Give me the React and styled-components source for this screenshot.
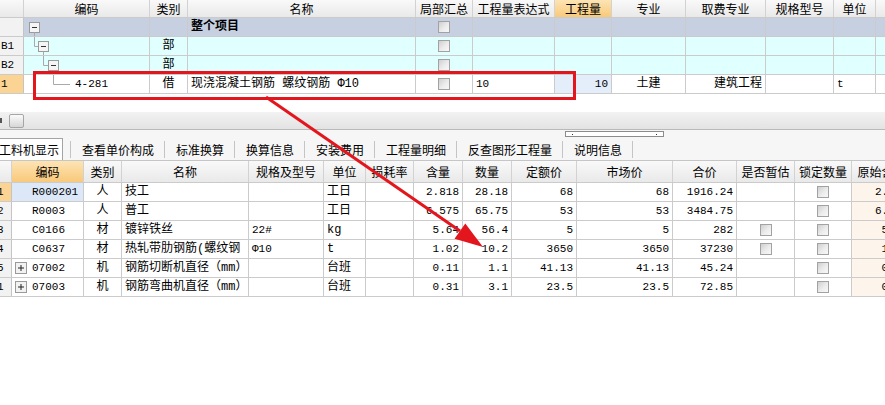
import React from "react";
import styled, { createGlobalStyle } from "styled-components";

const GlobalStyle = createGlobalStyle`
  html, body {
    margin: 0;
    padding: 0;
    background: #fff;
  }
  body {
    width: 885px;
    height: 405px;
    overflow: hidden;
    font-family: "Noto Sans CJK SC", sans-serif;
    font-size: 12px;
    color: #000;
  }
`;

const TOP_COLS = [24, 126, 38, 228, 57, 82, 57, 74, 80, 68, 42, 80]
  .map((w) => w + "px")
  .join(" ");
const BOTTOM_COLS = [12, 72, 38, 127, 75, 42, 48, 49, 49, 65, 96, 64, 58, 57, 60]
  .map((w) => w + "px")
  .join(" ");

const topHeaders = ["", "编码", "类别", "名称", "局部汇总", "工程量表达式", "工程量", "专业", "取费专业", "规格型号", "单位", ""];
const bottomHeaders = ["", "编码", "类别", "名称", "规格及型号", "单位", "损耗率", "含量", "数量", "定额价", "市场价", "合价", "是否暂估", "锁定数量", "原始含量"];

const topRows = [
  { head: "", level: 0, bg: "#c6d0e0", name: "整个项目", bold: true },
  { head: "B1", level: 1, bg: "#e0ffff", type: "部" },
  { head: "B2", level: 2, bg: "#e0ffff", type: "部" },
  {
    head: "1",
    level: 3,
    bg: "#fff",
    active: true,
    code: "4-281",
    type: "借",
    name: "现浇混凝土钢筋 螺纹钢筋 Φ10",
    expr: "10",
    qty: "10",
    major: "土建",
    fee: "建筑工程",
    unit: "t",
  },
];

const parts = [
  { n: "1", code: "R000201", sel: true, type: "人", name: "技工", spec: "", unit: "工日", qty: "2.818", num: "28.18", price: "68", market: "68", total: "1916.24", est: false, orig: "2.818" },
  { n: "2", code: "R0003", type: "人", name: "普工", spec: "", unit: "工日", qty: "6.575", num: "65.75", price: "53", market: "53", total: "3484.75", est: false, orig: "6.575" },
  { n: "3", code: "C0166", type: "材", name: "镀锌铁丝", spec: "22#", unit: "kg", qty: "5.64", num: "56.4", price: "5", market: "5", total: "282", est: true, orig: "5.64" },
  { n: "4", code: "C0637", type: "材", name: "热轧带肋钢筋(螺纹钢", spec: "Φ10", unit: "t", qty: "1.02", num: "10.2", price: "3650", market: "3650", total: "37230", est: true, orig: "1.02" },
  { n: "5", code: "07002", expand: true, type: "机", name: "钢筋切断机直径（mm）", spec: "", unit: "台班", qty: "0.11", num: "1.1", price: "41.13", market: "41.13", total: "45.24", est: false, orig: "0.11" },
  { n: "1", code: "07003", expand: true, type: "机", name: "钢筋弯曲机直径（mm）", spec: "", unit: "台班", qty: "0.31", num: "3.1", price: "23.5", market: "23.5", total: "72.85", est: false, orig: "0.31" },
];

const tabs = ["工料机显示", "查看单价构成", "标准换算", "换算信息", "安装费用", "工程量明细", "反查图形工程量", "说明信息"];

const TREE_X = [10, 19, 29];

const TreeLines = ({ level }) => {
  const line = "#a9a9a9";
  const parent = level > 0 ? TREE_X[level - 1] : null;
  const own = level < 3 ? TREE_X[level] : null;
  return (
    <svg width="50" height="18" viewBox="0 0 50 18" style={{ display: "block", flex: "none" }}>
      {parent !== null && (
        <>
          <line x1={parent + 0.5} y1="0" x2={parent + 0.5} y2="9.5" stroke={line} />
          <line x1={parent + 0.5} y1="9.5" x2={own !== null ? own - 5 : 46} y2="9.5" stroke={line} />
        </>
      )}
      {own !== null && (
        <>
          <rect x={own - 4.5} y="4.5" width="10" height="10" fill="#f5f5f5" stroke="#9a9a9a" />
          <line x1={own - 2} y1="9.5" x2={own + 3} y2="9.5" stroke="#333" />
          <line x1={own + 0.5} y1="14.5" x2={own + 0.5} y2="18" stroke={line} />
        </>
      )}
    </svg>
  );
};

const PlusBox = () => (
  <svg width="12" height="12" viewBox="0 0 12 12" style={{ display: "block", flex: "none" }}>
    <rect x="0.5" y="0.5" width="11" height="11" fill="#f2f2f2" stroke="#9a9a9a" />
    <line x1="3" y1="6" x2="9" y2="6" stroke="#222" />
    <line x1="6" y1="3" x2="6" y2="9" stroke="#222" />
  </svg>
);

const Annotation = () => (
  <Overlay width="885" height="405" viewBox="0 0 885 405">
    <rect x="34.5" y="72.5" width="540" height="26" fill="none" stroke="#e3161e" strokeWidth="3" />
    <line x1="266" y1="97" x2="460" y2="231" stroke="#e3161e" strokeWidth="3" />
    <polygon points="483,247 454.5,238.8 465.3,223.5" fill="#e3161e" />
  </Overlay>
);

const App = () => (
  <>
    <GlobalStyle />
    <Page>
      <TopGrid>
        <GridRow $cols={TOP_COLS} $h={18}>
          {topHeaders.map((h, i) => (
            <HeadCell key={i} $active={i === 6}>
              {h}
            </HeadCell>
          ))}
        </GridRow>
        {topRows.map((r, i) => (
          <GridRow key={i} $cols={TOP_COLS} $h={19} $bg={r.bg}>
            <RowHead $active={r.active}>
              <Mono>{r.head}</Mono>
            </RowHead>
            <TreeCell>
              <TreeLines level={r.level} />
              {r.code && <Mono>{r.code}</Mono>}
            </TreeCell>
            <Cell $align="center">{r.type}</Cell>
            <Cell $bold={r.bold}>{r.name}</Cell>
            <Cell $align="center">
              <Check />
            </Cell>
            <Cell>
              <Mono>{r.expr}</Mono>
            </Cell>
            <Cell $align="right" $bg={r.qty ? "#e4eefa" : undefined}>
              <Mono>{r.qty}</Mono>
            </Cell>
            <Cell $align="center">{r.major}</Cell>
            <Cell $align="right">{r.fee}</Cell>
            <Cell />
            <Cell>
              <Mono>{r.unit}</Mono>
            </Cell>
            <Cell />
          </GridRow>
        ))}
      </TopGrid>

      <Toolbar>
        <EdgeMark />
        <ToolButton />
      </Toolbar>

      <TabBar>
        {tabs.map((t, i) => (
          <React.Fragment key={t}>
            <Tab $selected={i === 0}>{t}</Tab>
            <TabSep />
          </React.Fragment>
        ))}
        <Splitter>
          <Dot />
          <Dot />
        </Splitter>
      </TabBar>

      <BottomGrid>
        <GridRow $cols={BOTTOM_COLS} $h={22}>
          {bottomHeaders.map((h, i) => (
            <HeadCell key={i} $active={i === 1}>
              {h}
            </HeadCell>
          ))}
        </GridRow>
        {parts.map((p, i) => (
          <GridRow key={i} $cols={BOTTOM_COLS} $h={19}>
            <RowHead $active={p.sel} $clip>
              <Mono>{p.n}</Mono>
            </RowHead>
            <CodeCell $bg={p.sel ? "#dce8f7" : undefined} $expand={p.expand}>
              {p.expand && <PlusBox />}
              <Mono>{p.code}</Mono>
            </CodeCell>
            <Cell $align="center">{p.type}</Cell>
            <Cell>{p.name}</Cell>
            <Cell>
              <Mono>{p.spec}</Mono>
            </Cell>
            <Cell>{p.unit}</Cell>
            <Cell />
            <Cell $align="right">
              <Mono>{p.qty}</Mono>
            </Cell>
            <Cell $align="right">
              <Mono>{p.num}</Mono>
            </Cell>
            <Cell $align="right">
              <Mono>{p.price}</Mono>
            </Cell>
            <Cell $align="right">
              <Mono>{p.market}</Mono>
            </Cell>
            <Cell $align="right">
              <Mono>{p.total}</Mono>
            </Cell>
            <Cell $align="center">{p.est && <Check />}</Cell>
            <Cell $align="center">
              <Check />
            </Cell>
            <Cell $align="right" $bg="#fdf5ec">
              <Mono>{p.orig}</Mono>
            </Cell>
          </GridRow>
        ))}
      </BottomGrid>

      <Annotation />
    </Page>
  </>
);

const Page = styled.div`
  position: relative;
  width: 885px;
  height: 405px;
  overflow: hidden;
  display: flex;
  flex-direction: column;
  background: #fff;
`;

const TopGrid = styled.div`
  height: 112px;
  flex: none;
  background: #fff;
`;

const GridRow = styled.div`
  display: grid;
  grid-template-columns: ${(p) => p.$cols};
  height: ${(p) => p.$h}px;
  box-sizing: border-box;
  border-bottom: 1px solid #cbcbcb;
  background: ${(p) => p.$bg || "#fff"};
  width: max-content;
`;

const Cell = styled.div`
  display: flex;
  align-items: center;
  justify-content: ${(p) =>
    p.$align === "right" ? "flex-end" : p.$align === "center" ? "center" : "flex-start"};
  padding: 0 3px;
  box-sizing: border-box;
  min-width: 0;
  overflow: hidden;
  white-space: nowrap;
  border-right: 1px solid #cbcbcb;
  background: ${(p) => p.$bg || "transparent"};
  font-family: "Liberation Mono", "Noto Sans CJK SC", monospace;
  font-size: 12px;
  line-height: 1;
  font-weight: ${(p) => (p.$bold ? 700 : 400)};
`;

const HeadCell = styled(Cell)`
  justify-content: center;
  font-family: "Noto Sans CJK SC", sans-serif;
  border-right: 1px solid #d2d2d2;
  background: ${(p) =>
    p.$active
      ? "linear-gradient(#fde4b4, #f8c97a)"
      : "linear-gradient(#f9f9f9, #e9e9e9)"};
`;

const RowHead = styled(Cell)`
  padding: 0 0 0 ${(p) => (p.$clip ? "0" : "1px")};
  background: ${(p) => (p.$active ? "#fbd494" : "#f2f2f2")};
  border-right: 1px solid #c4c4c4;

  & > span {
    margin-left: ${(p) => (p.$clip ? "-3px" : "0")};
  }
`;

const TreeCell = styled(Cell)`
  padding: 0;
  align-items: stretch;

  & > span {
    align-self: center;
    margin-left: 1px;
  }
`;

const CodeCell = styled(Cell)`
  padding-left: ${(p) => (p.$expand ? "3px" : "20px")};
  gap: 5px;
`;

const Mono = styled.span`
  font-family: "Liberation Mono", monospace;
  font-size: 11px;
`;

const Check = styled.span`
  display: block;
  width: 12px;
  height: 12px;
  box-sizing: border-box;
  border: 1px solid #a2a2a2;
  background: linear-gradient(135deg, #cfcfcf 0%, #ececec 55%, #f8f8f8 100%);
`;

const Toolbar = styled.div`
  height: 18px;
  flex: none;
  box-sizing: border-box;
  display: flex;
  align-items: center;
  background: linear-gradient(#f2f2f2, #e3e3e3);
  border-bottom: 1px solid #b9b9b9;
`;

const EdgeMark = styled.span`
  width: 2px;
  height: 5px;
  background: #555;
  margin-right: 7px;
`;

const ToolButton = styled.span`
  width: 15px;
  height: 14px;
  box-sizing: border-box;
  border: 1px solid #a6a6a6;
  border-radius: 2px;
  background: linear-gradient(#fbfbfb, #d6d6d6);
`;

const TabBar = styled.div`
  position: relative;
  height: 31px;
  flex: none;
  box-sizing: border-box;
  display: flex;
  align-items: flex-end;
  background: #f6f6f6;
  border-bottom: 1px solid #c6c6c6;
  font-family: "Noto Sans CJK SC", sans-serif;
  font-size: 12px;
`;

const Tab = styled.div`
  height: 22px;
  box-sizing: border-box;
  display: flex;
  align-items: center;
  white-space: nowrap;
  padding: ${(p) => (p.$selected ? "0 3px" : "0 10px 0 11px")};
  margin-left: ${(p) => (p.$selected ? "-5px" : "0")};
  margin-right: ${(p) => (p.$selected ? "7px" : "0")};
  background: ${(p) => (p.$selected ? "#fff" : "transparent")};
  border: ${(p) => (p.$selected ? "1px solid #a4a4a4" : "none")};
  border-bottom: none;
`;

const TabSep = styled.span`
  width: 1px;
  height: 17px;
  margin-bottom: 2px;
  background: #c4c4c4;
`;

const Splitter = styled.div`
  position: absolute;
  left: 565px;
  top: 1px;
  width: 99px;
  height: 6px;
  box-sizing: border-box;
  border: 1px solid #8c8c8c;
  background: #fff;
  display: flex;
  justify-content: space-between;
  align-items: flex-end;
  padding: 0 6px 1px;
`;

const Dot = styled.span`
  width: 1px;
  height: 1px;
  background: #333;
`;

const BottomGrid = styled.div`
  flex: 1;
  background: #fff;
`;

const Overlay = styled.svg`
  position: absolute;
  left: 0;
  top: 0;
  pointer-events: none;
`;

export default App;
